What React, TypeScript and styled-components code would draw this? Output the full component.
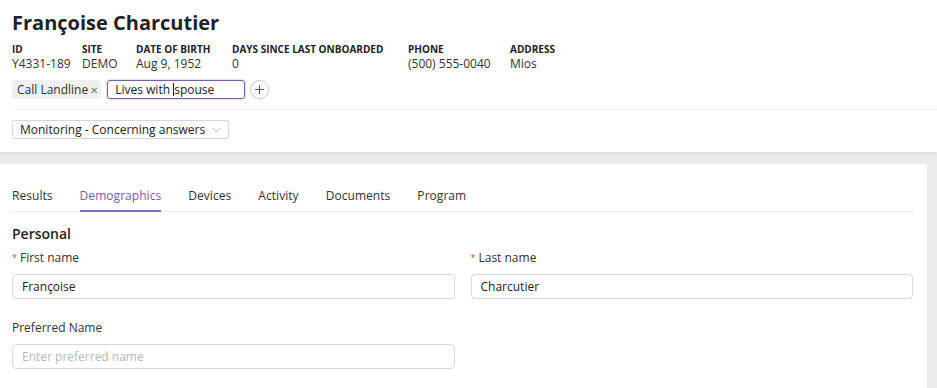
import React from 'react'
import styled, { createGlobalStyle } from 'styled-components'

const GlobalStyle = createGlobalStyle`
  html, body {
    margin: 0;
    padding: 0;
    background: #ebebeb;
    font-family: 'Open Sans', 'Liberation Sans', sans-serif;
    color: #222;
  }
  * {
    box-sizing: border-box;
  }
`

const Page = styled.div`
  width: 937px;
  height: 388px;
  overflow: hidden;
  background: #ebebeb;
  display: flex;
  flex-direction: column;
  gap: 12px;
`

const Header = styled.header`
  background: #fff;
  padding: 8px 0 13px 12px;
  box-shadow: 0 1px 2px rgba(0, 0, 0, 0.08);
`

const Title = styled.h1`
  margin: 0;
  font-size: 20px;
  font-weight: 700;
  line-height: 30px;
  color: #222;
`

const InfoRow = styled.div`
  display: flex;
  margin-top: 5px;
`

const InfoItem = styled.div<{ w: number }>`
  width: ${({ w }) => w}px;
  display: flex;
  flex-direction: column;
`

const InfoLabel = styled.span`
  font-size: 10px;
  font-weight: 700;
  line-height: 13px;
  text-transform: uppercase;
  color: #222;
  white-space: nowrap;
`

const InfoValue = styled.span`
  font-size: 12px;
  line-height: 15px;
  color: #333;
`

const TagRow = styled.div`
  display: flex;
  align-items: center;
  gap: 6px;
  margin-top: 9px;
`

const Chip = styled.span`
  display: flex;
  align-items: center;
  gap: 2px;
  height: 19px;
  padding: 0 3px 0 5px;
  background: #f0f0f0;
  border-radius: 2px;
  font-size: 12px;
  color: #333;
`

const ChipClose = styled.span`
  font-size: 10px;
  color: #777;
`

const TagInput = styled.div`
  width: 138px;
  height: 19px;
  border: 1px solid #7a5cb0;
  border-radius: 3px;
  box-shadow: 0 0 0 1px rgba(122, 92, 176, 0.18);
  font-size: 12px;
  line-height: 17px;
  padding: 0 7px;
  color: #222;
  white-space: nowrap;
`

const Caret = styled.span`
  display: inline-block;
  width: 1px;
  height: 13px;
  background: #222;
  vertical-align: -2px;
`

const PlusButton = styled.span`
  width: 19px;
  height: 19px;
  margin-left: -1px;
  border-radius: 50%;
  border: 1px solid #c8c8c8;
  display: flex;
  align-items: center;
  justify-content: center;
`

const Divider = styled.div`
  height: 1px;
  background: #f0f0f0;
  margin: 10px 0;
`

const Select = styled.div`
  display: flex;
  width: fit-content;
  align-items: center;
  gap: 7px;
  height: 19px;
  padding: 0 7px;
  border: 1px solid #d6d6d6;
  border-radius: 2px;
  font-size: 12px;
  color: #222;
`

const Card = styled.main`
  flex: 1;
  margin-right: 10px;
  background: #fff;
  border-top-right-radius: 5px;
  padding: 19px 14px 0 12px;
`

const Tabs = styled.nav`
  display: flex;
  gap: 27px;
  border-bottom: 1px solid #ebebeb;
`

const Tab = styled.span<{ active?: boolean }>`
  font-size: 12px;
  line-height: 16px;
  letter-spacing: 0.05px;
  padding: 5px 0 6px;
  color: ${({ active }) => (active ? '#7a5cb0' : '#333')};
  border-bottom: 2px solid ${({ active }) => (active ? '#8a6cc0' : 'transparent')};
  margin-bottom: -1px;
`

const SectionTitle = styled.h2`
  margin: 13px 0 0;
  font-size: 14px;
  font-weight: 600;
  line-height: 18px;
  color: #222;
`

const FieldGrid = styled.div`
  display: grid;
  grid-template-columns: 1fr 1fr;
  column-gap: 16px;
  row-gap: 21px;
  margin-top: 7px;
`

const Field = styled.div`
  display: flex;
  flex-direction: column;
  gap: 8px;
`

const Label = styled.label`
  font-size: 12px;
  line-height: 16px;
  color: #333;
`

const Required = styled.span`
  color: #e0442c;
  font-size: 9px;
  margin-right: 3px;
  vertical-align: 1px;
`

const Input = styled.div<{ placeholder?: boolean }>`
  height: 25px;
  border: 1px solid #d9d9d9;
  border-radius: 4px;
  padding: 0 9px;
  font-size: 12px;
  line-height: 23px;
  color: ${({ placeholder }) => (placeholder ? '#b8b8b8' : '#222')};
`

const info = [
  { label: 'ID', value: 'Y4331-189', w: 70 },
  { label: 'Site', value: 'DEMO', w: 54 },
  { label: 'Date of birth', value: 'Aug 9, 1952', w: 96 },
  { label: 'Days since last onboarded', value: '0', w: 176 },
  { label: 'Phone', value: '(500) 555-0040', w: 102 },
  { label: 'Address', value: 'Mios', w: 80 },
]

const tabs = ['Results', 'Demographics', 'Devices', 'Activity', 'Documents', 'Program']

const App: React.FC = () => {
  return (
    <Page>
      <GlobalStyle />
      <Header>
        <Title>Françoise Charcutier</Title>
        <InfoRow>
          {info.map((item) => (
            <InfoItem key={item.label} w={item.w}>
              <InfoLabel>{item.label}</InfoLabel>
              <InfoValue>{item.value}</InfoValue>
            </InfoItem>
          ))}
        </InfoRow>
        <TagRow>
          <Chip>
            Call Landline <ChipClose>✕</ChipClose>
          </Chip>
          <TagInput>
            Lives with <Caret />
            spouse
          </TagInput>
          <PlusButton>
            <svg width="11" height="11" viewBox="0 0 11 11">
              <path d="M5.5 1v9M1 5.5h9" stroke="#555" strokeWidth="1" />
            </svg>
          </PlusButton>
        </TagRow>
        <Divider />
        <Select>
          Monitoring - Concerning answers
          <svg width="9" height="6" viewBox="0 0 9 6">
            <path d="M1 1l3.5 4L8 1" fill="none" stroke="#bbb" strokeWidth="1" />
          </svg>
        </Select>
      </Header>
      <Card>
        <Tabs>
          {tabs.map((t) => (
            <Tab key={t} active={t === 'Demographics'}>
              {t}
            </Tab>
          ))}
        </Tabs>
        <SectionTitle>Personal</SectionTitle>
        <FieldGrid>
          <Field>
            <Label>
              <Required>*</Required>First name
            </Label>
            <Input>Françoise</Input>
          </Field>
          <Field>
            <Label>
              <Required>*</Required>Last name
            </Label>
            <Input>Charcutier</Input>
          </Field>
          <Field>
            <Label>Preferred Name</Label>
            <Input placeholder>Enter preferred name</Input>
          </Field>
        </FieldGrid>
      </Card>
    </Page>
  )
}

export default App
